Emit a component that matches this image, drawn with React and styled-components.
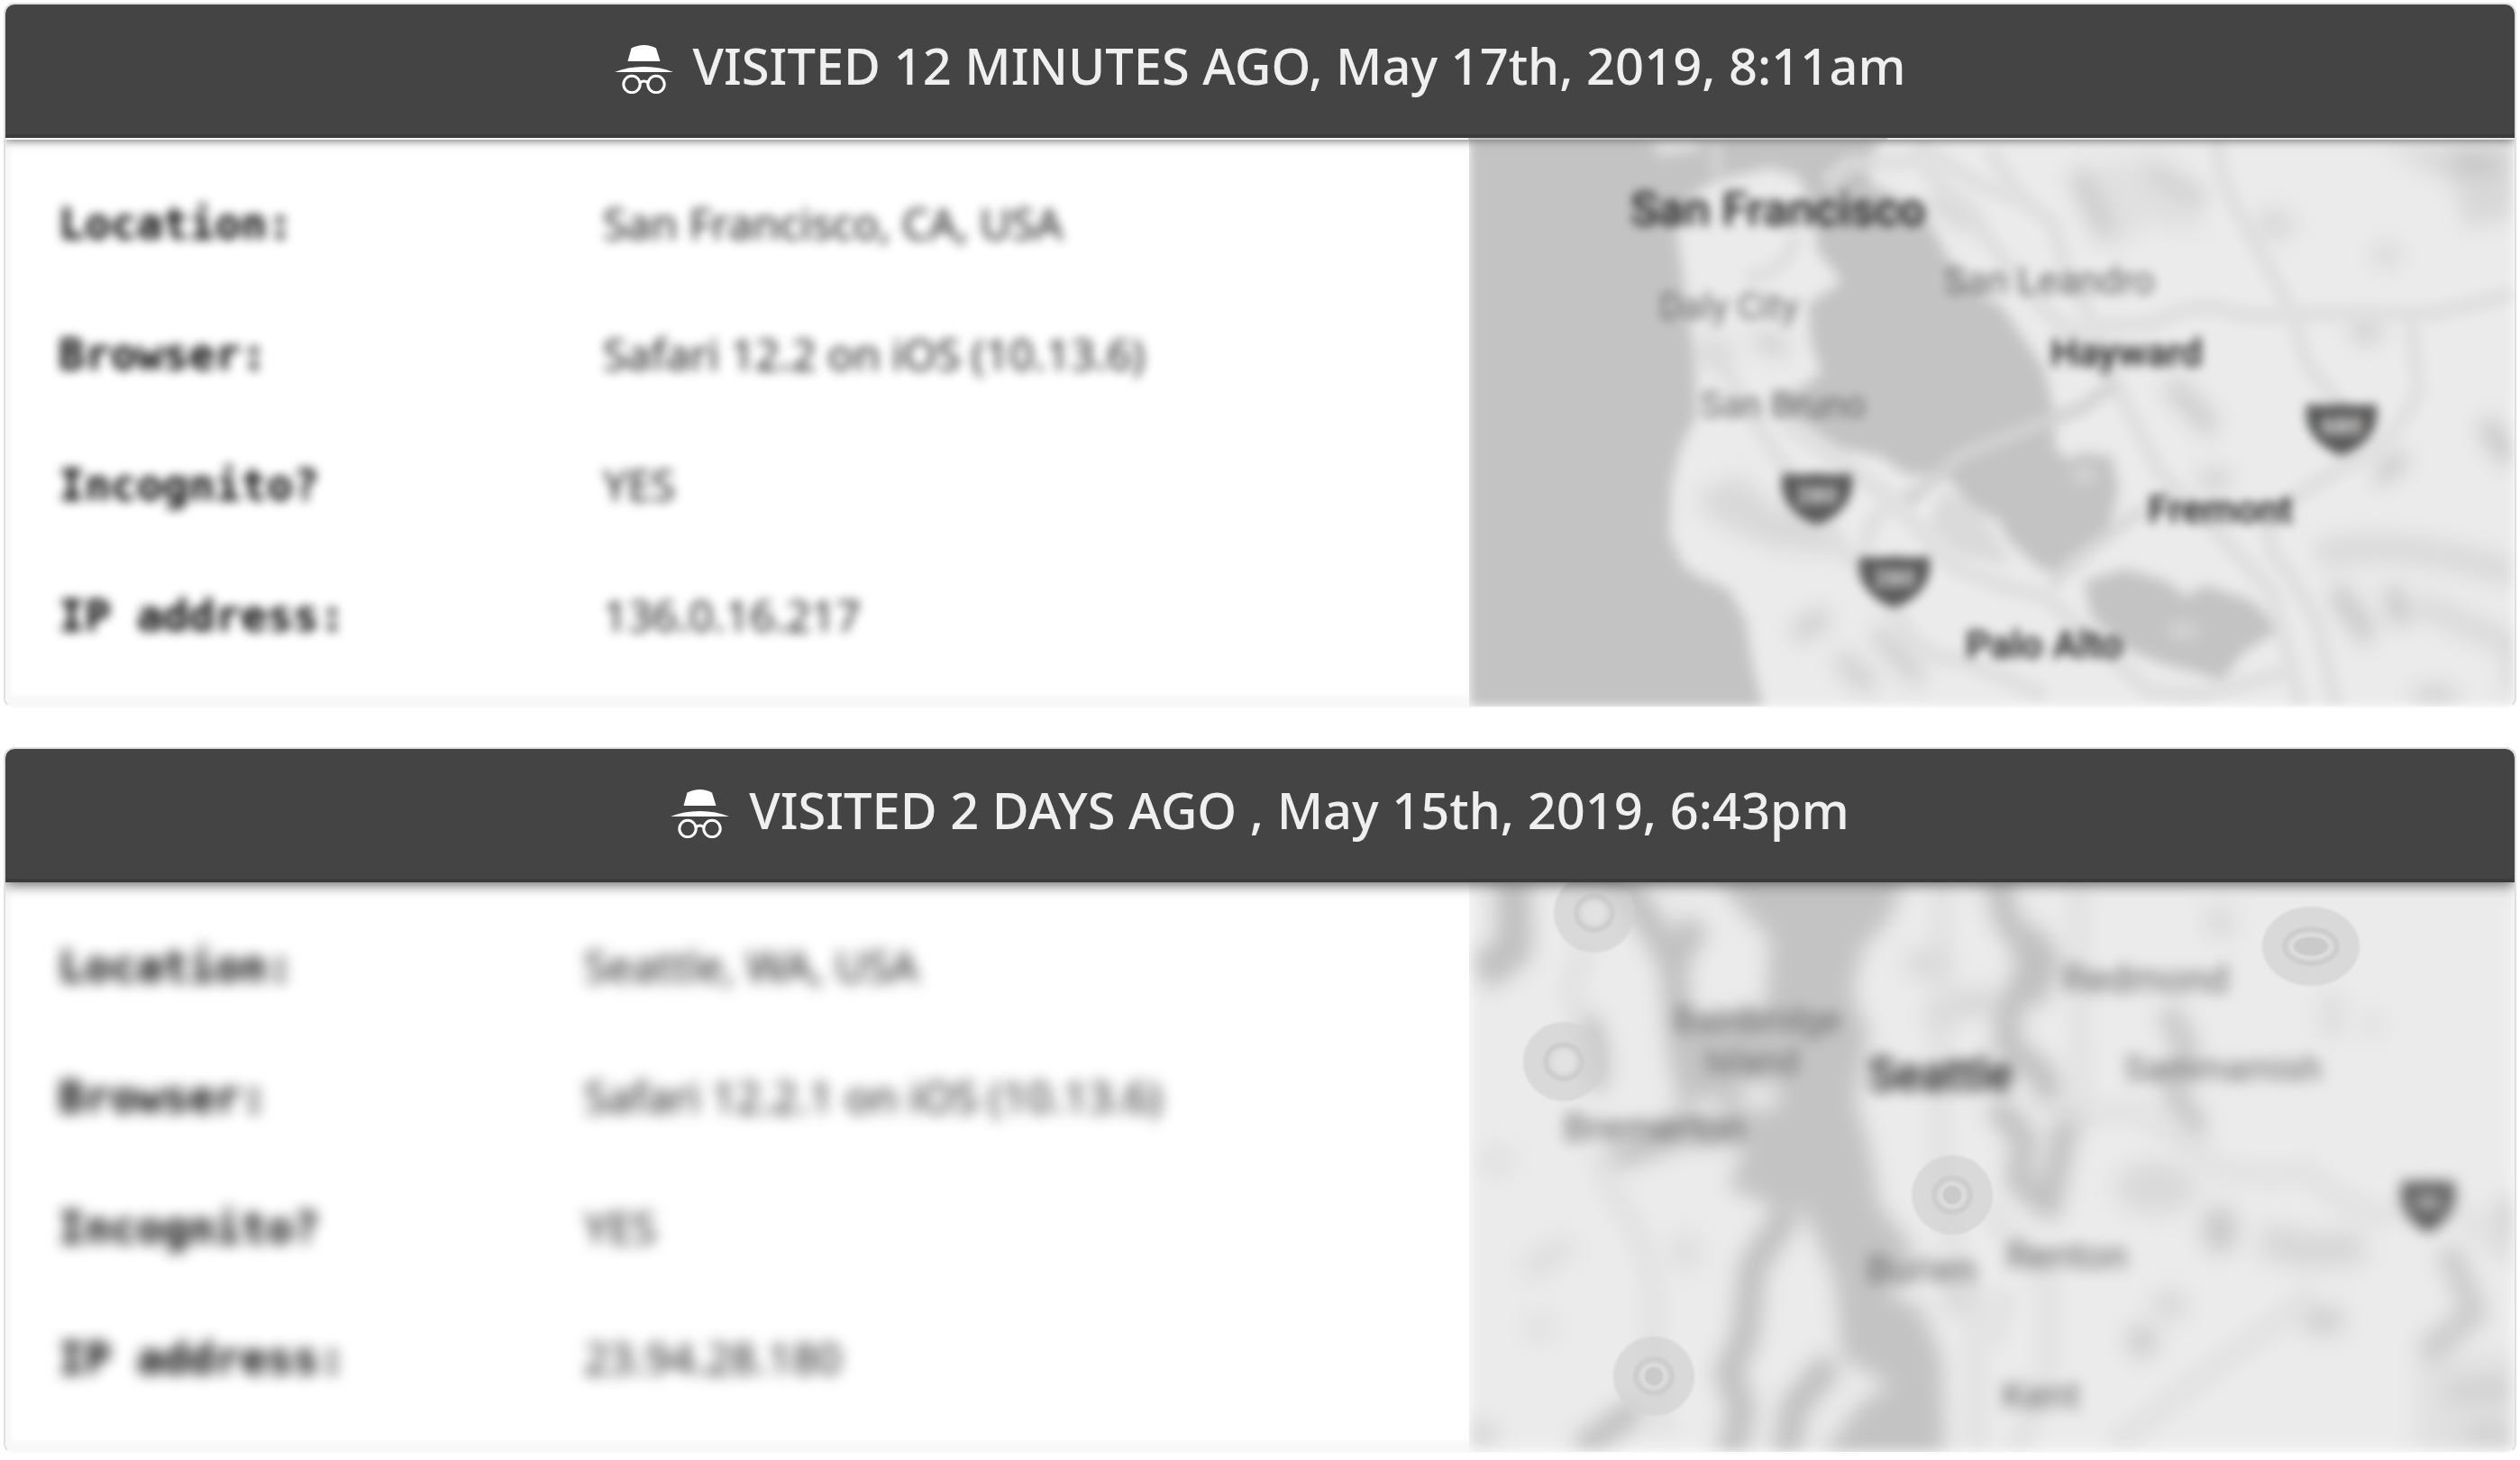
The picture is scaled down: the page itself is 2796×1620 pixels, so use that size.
import React from 'react';
import styled, { createGlobalStyle } from 'styled-components';

const GlobalStyle = createGlobalStyle`
  *, *::before, *::after { box-sizing: border-box; }
  body { margin: 0; background: #fff; }
`;

const Page = styled.main`
  display: flex;
  flex-direction: column;
  gap: 43px;
  padding: 3px 4px;
  font-family: 'Noto Sans', sans-serif;
`;

const Card = styled.article`
  border: 2px solid #dfdfdf;
  border-bottom-color: #fbfbfb;
  border-radius: 12px;
  overflow: hidden;
  background: #fff;
`;

const CardHeader = styled.header`
  position: relative;
  z-index: 1;
  display: flex;
  align-items: center;
  justify-content: center;
  gap: 22px;
  height: 148px;
  background: #444;
  border-bottom: 4px solid #3b3b3b;
  box-shadow: 0 3px ${(p) => (p.$deep ? 14 : 10)}px rgba(0, 0, 0, 0.6);
`;

const Seam = styled.div`
  position: relative;
  z-index: 2;
  height: 2px;
  background: linear-gradient(90deg, #fff 58.3%, #c6c6c6 58.3%, #c6c6c6 75%, #e9e9e9 75%);
`;

const Title = styled.h2`
  margin: 0;
  padding-bottom: 10px;
  color: #efefef;
  font-size: 56px;
  font-weight: 500;
  line-height: 76px;
  white-space: pre;
`;

const CardBody = styled.div`
  display: grid;
  grid-template-columns: 7fr 5fr;
  min-height: ${(p) => p.$minHeight}px;
  overflow: hidden;
`;

const Details = styled.dl`
  display: grid;
  grid-template-columns: ${(p) => p.$labelWidth}px 1fr;
  grid-auto-rows: 145px;
  align-items: center;
  align-content: start;
  margin: 0;
  padding: 20px 0 0 59px;
  box-shadow: inset 8px -14px 4px -2px #f8f8f8;
`;

const Label = styled.dt`
  color: #000;
  font: 700 48px/60px 'DejaVu Sans Mono', monospace;
  filter: blur(${(p) => p.$blur}px);
`;

const Value = styled.dd`
  margin: 0;
  color: #1c1c1c;
  font-size: 48px;
  line-height: 60px;
  filter: blur(${(p) => p.$blur}px);
`;

const MapFrame = styled.div`
  display: flex;
  min-width: 0;
  overflow: hidden;
`;

const MapDrawing = styled.svg`
  display: block;
  width: 100%;
  height: ${(p) => p.$height}px;
  font-family: Roboto, sans-serif;
  filter: blur(${(p) => p.$blur}px);
`;

const Terrain = styled.g`
  filter: blur(${(p) => p.$blur}px);
`;

const MapMarks = styled.g`
  filter: blur(1px);
`;

const HatIcon = () => (
  <svg width="65" height="54" viewBox="0 0 65 54" fill="#fff" aria-hidden="true">
    <path d="M14.5 18 L18.5 3.5 Q25 0 32.500 0 Q40 0 46 3.500 L50.500 18Z" />
    <path d="M0 30 Q14 24 32.500 24 Q51 24 65 30Z" />
    <g fill="none" stroke="#fff" strokeWidth="3">
      <circle cx="19" cy="43.500" r="9.200" />
      <circle cx="46" cy="43.500" r="9.200" />
      <path d="M28 42 Q32.500 38 37 42" />
    </g>
  </svg>
);

const Shield = ({ x, y, w = 38, label }) => (
  <g transform={`translate(${x} ${y})`}>
    <path
      d={`M${-w} -25 Q${-w / 2} -22 0 -25 Q${w / 2} -22 ${w} -25 C${w + 8} 6 ${w * 0.5} 27 0 32 C${-w * 0.5} 27 ${-w - 8} 6 ${-w} -25Z`}
      fill="#5c5c5c"
    />
    <text y="9" textAnchor="middle" fontSize="26" fontWeight="700" fill="#e4e4e4">{label}</text>
  </g>
);

const Place = ({ x, y, size = 40, city, children }) => (
  <text x={x} y={y} fontSize={size} fontWeight={city ? 500 : 400} fill={city ? '#141414' : '#666'}>
    {children}
  </text>
);

const BayAreaMap = () => (
  <MapDrawing $blur={6} $height={629} viewBox="0 0 1162 629" preserveAspectRatio="xMidYMid slice" role="img" aria-label="Map of San Francisco">
    <rect width="1162" height="629" fill="#ebebeb" />
    <Terrain $blur={11} transform="translate(-10 -15) scale(.3827 .4209)">
      <g fill="#d8d8d8" style={{ filter: 'blur(24px)' }}>
        <path d="M1830 110 L2000 80 2100 180 2160 280 1980 260 1900 330 1850 240Z" opacity=".6" />
        <path d="M1790 120 L1880 290" stroke="#ccc" strokeWidth="60" />
        <path d="M2000 110 L2160 200" stroke="#d2d2d2" strokeWidth="60" />
        <path d="M2690 60 L3080 40 3060 240 2920 270 2880 150Z" />
        <path d="M2880 90 L3010 100" stroke="#c6c6c6" strokeWidth="60" />
        <path d="M2060 680 L2190 800" stroke="#cdcdcd" strokeWidth="60" />
        <ellipse cx="2190" cy="930" rx="50" ry="22" fill="#cacaca" />
        <ellipse cx="2630" cy="540" rx="50" ry="24" fill="#c8c8c8" />
        <ellipse cx="2690" cy="340" rx="45" ry="30" />
        <ellipse cx="2365" cy="260" rx="60" ry="40" />
        <path d="M2660 930 L2740 870" stroke="#c4c4c4" strokeWidth="44" />
        <path d="M2970 780 L3050 880" stroke="#c8c8c8" strokeWidth="60" />
        <path d="M2490 1130 Q2720 1080 3060 1180" fill="none" stroke="#d8d8d8" strokeWidth="70" />
        <path d="M2540 1220 L2640 1350 M2700 1220 L2740 1310" stroke="#c8c8c8" strokeWidth="60" />
        <path d="M2780 1260 L3060 1370 3060 1500" fill="none" stroke="#d8d8d8" strokeWidth="60" />
        <ellipse cx="2830" cy="1500" rx="70" ry="22" fill="#ccc" />
        <path d="M690 970 L820 920 900 1000 1060 1020 1110 1130 900 1110 720 1030Z" />
        <path d="M970 1340 L1070 1290 M1210 1330 L1340 1460 M1100 1400 L1200 1480" stroke="#cecece" strokeWidth="54" />
        <path d="M860 560 L950 590" stroke="#ccc" strokeWidth="44" />
        <path d="M1370 190 L1500 260" stroke="#c8c8c8" strokeWidth="34" />
        <ellipse cx="740" cy="600" rx="60" ry="40" />
      </g>
      <path
        fill="#c3c3c3"
        d="M-60 -40 H1250 L1190 100 1190 150 1340 220 1390 300 1420 350 1500 440 1568 470 1614 530 1694 636 1723 742 1728 849 1770 880 1800 860 1892 870 1912 960 1882 1071 1800 1120 1733 1177 1684 1167 1594 1092 1564 1040 1480 1000 1430 940 1400 920 1300 920 1220 870 1100 850 960 760 900 730 990 690 1050 650 1020 570 1010 470 1110 410 1040 330 1020 200 980 130 900 110 740 145 650 200 630 270 650 400 680 600 690 760 640 850 615 950 610 1080 650 1160 700 1190 780 1220 830 1300 850 1420 900 1600 H-60Z"
      />
      <path fill="#ebebeb" d="M550 20 H710 L690 65 580 80Z" opacity=".7" />
      <path fill="#dadada" d="M1400 960 L1500 1000 1560 1090 1600 1160 1440 1130 1360 1050Z" />
      <path fill="#c3c3c3" d="M1813 1199 L1932 1167 2051 1199 2110 1241 2160 1209 2300 1252 2379 1326 2270 1390 2210 1464 2150 1443 2051 1421 1932 1379 1833 1294Z" />
      <ellipse cx="2100" cy="1330" rx="50" ry="30" fill="#cfcfcf" />
      <ellipse cx="1810" cy="920" rx="40" ry="24" fill="#d2d2d2" />
    </Terrain>
    <g transform="translate(-10 -15) scale(.3827 .4209)">
      <g fill="none" stroke="#dedede" strokeWidth="50" opacity=".7" strokeLinejoin="round">
        <path d="M2195 0 Q2200 130 2250 212 L2409 477 2458 626 2558 741 2558 901 2409 986 2349 1050 Q2340 1130 2400 1170 L2488 1310 2560 1600" />
        <path d="M1843 530 L2011 520 Q2110 470 2200 480 Q2300 510 2400 495 L2826 493 3072 440" />
        <path d="M1535 64 L1634 191 1723 260 1753 361 1843 530 1902 679 2031 912 2210 1083 2359 1232 2448 1560" />
        <path d="M1060 150 L1130 100 1330 90 1480 230 1640 430 1740 520 1843 560" />
        <path d="M1320 40 L1500 150 1640 200" />
        <path d="M2760 510 L2780 700 Q2720 830 2558 901" />
        <path d="M740 590 L900 840 1100 1100 1280 1300 Q1330 1400 1460 1410 L1700 1500" />
        <path d="M940 780 L1250 980 1430 1160 1568 1210 1700 1240 1850 1370 2000 1490 2150 1500 2400 1440" />
        <path d="M1180 1120 Q1180 1010 1320 970" />
        <path d="M830 400 Q960 390 970 280" />
      </g>
      <g fill="none" stroke="#d2d2d2" strokeWidth="44" opacity=".8">
        <path d="M1300 990 L1450 870 1568 825 1800 745 1902 679" />
        <path d="M1713 1210 L1850 1100 1980 1010" opacity=".7" />
        <path d="M740 30 L750 130" />
      </g>
    </g>
    <Place x={180} y={95} size={52} city>San Francisco</Place>
    <Place x={212} y={199}>Daly City</Place>
    <Place x={258} y={308}>San Bruno</Place>
    <Place x={528} y={171} size={42}>San Leandro</Place>
    <Place x={646} y={251} size={43} city>Hayward</Place>
    <Place x={754} y={425} size={43} city>Fremont</Place>
    <Place x={552} y={575} size={43} city>Palo Alto</Place>
    <Shield x={387} y={395} label="280" />
    <Shield x={473} y={487} label="280" />
    <Shield x={969} y={318} label="680" />
  </MapDrawing>
);

const SeattleMap = () => (
  <MapDrawing $blur={8} $height={632} viewBox="0 0 1162 632" preserveAspectRatio="xMidYMid slice" role="img" aria-label="Map of Seattle">
    <rect width="1162" height="632" fill="#ebebeb" />
    <Terrain $blur={22} transform="translate(-10 -19) scale(.3827 .4209)">
      <g fill="#dedede" style={{ filter: 'blur(14px)' }}>
        <path d="M190 1070 L320 1000" stroke="#dcdcdc" strokeWidth="60" />
        <ellipse cx="110" cy="780" rx="50" ry="35" />
        <ellipse cx="235" cy="1220" rx="40" ry="35" />
        <ellipse cx="655" cy="1020" rx="50" ry="50" />
        <ellipse cx="2205" cy="150" rx="45" ry="36" fill="#d6d6d6" />
        <path d="M2530 340 L2530 450 M2650 400 L2650 440" stroke="#d8d8d8" strokeWidth="50" />
        <ellipse cx="2020" cy="850" rx="120" ry="70" fill="#d9d9d9" />
        <ellipse cx="2205" cy="960" rx="50" ry="60" fill="#c6c6c6" />
        <path d="M2330 980 Q2450 1040 2620 1000" fill="none" stroke="#d6d6d6" strokeWidth="90" />
        <ellipse cx="2505" cy="1200" rx="65" ry="36" fill="#cdcdcd" />
        <ellipse cx="1980" cy="1255" rx="42" ry="42" fill="#c8c8c8" />
        <ellipse cx="2060" cy="1160" rx="50" ry="40" fill="#d6d6d6" />
        <path d="M2780 1290 H3080 V1560 H2780Z" fill="#e0e0e0" />
        <path d="M2870 1390 L3050 1380 M2920 1500 H3050" stroke="#cdcdcd" strokeWidth="50" />
        <ellipse cx="3040" cy="940" rx="40" ry="70" fill="#d2d2d2" />
        <path d="M1370 420 Q1430 350 1560 360 M1300 260 H1420" fill="none" stroke="#d4d4d4" strokeWidth="60" />
        <ellipse cx="1450" cy="1140" rx="45" ry="40" fill="#d2d2d2" />
        <ellipse cx="60" cy="1500" rx="45" ry="30" fill="#cfcfcf" />
      </g>
      <path
        fill="#c3c3c3"
        d="M730 0 H1300 L1250 140 1170 220 1140 340 1190 440 1150 620 1190 740 1220 900 1320 1010 1250 1130 1340 1170 1400 1300 1410 1620 H1000 L1160 1420 1250 1370 1110 1300 1090 1100 1030 970 990 900 950 920 860 880 780 850 830 740 660 740 470 800 400 770 560 690 640 640 600 480 640 420 890 370 900 190 850 150 800 100Z"
      />
      <ellipse cx="720" cy="640" rx="60" ry="28" fill="#e6e6e6" />
      <ellipse cx="870" cy="610" rx="64" ry="38" fill="#e8e8e8" />
      <g fill="none" stroke="#c0c0c0" strokeLinejoin="round" strokeWidth="80">
        <path d="M960 910 L870 1030 850 1060 830 1240 780 1340 820 1430 780 1600" />
        <path d="M1080 1310 L970 1430 940 1600" />
        <path d="M155 -20 L160 220 60 290" strokeWidth="100" />
        <path d="M430 0 L560 160 620 260 690 150 M620 240 L640 460" />
        <path d="M370 400 L400 480 400 590" strokeWidth="60" />
        <path d="M350 1540 L520 1430" strokeWidth="70" />
        <path d="M1555 0 L1580 130 1664 240 1620 340 1590 400 V480 L1690 550 1720 620" strokeWidth="75" />
        <path d="M1640 190 L1690 260 1640 350" strokeWidth="110" />
        <path d="M1550 630 L1640 720 1620 830 1710 900 1750 720 1780 650" strokeWidth="70" />
        <path d="M2051 380 L2110 480 2071 600 2150 710" stroke="#c8c8c8" strokeWidth="70" />
        <path d="M2865 1010 L2945 1180 2796 1290" stroke="#cbcbcb" strokeWidth="70" />
      </g>
    </Terrain>
    <g transform="translate(-10 -19) scale(.3827 .4209)">
      <g fill="none" stroke="#dedede" strokeWidth="80" strokeLinejoin="round" opacity=".5">
        <path d="M370 200 L320 340 370 420" />
        <path d="M400 760 L450 870 Q560 1020 560 1130 V1260 L590 1500" />
        <path d="M1400 0 L1390 720 1430 1000 1500 1180 1500 1600" />
        <path d="M1793 0 L1803 600 1793 700" />
        <path d="M1700 650 H1950 Q2060 680 2200 800 Q2330 830 2458 810 Q2560 900 2680 920 L2860 880 3080 1050" />
        <path d="M2480 1130 L2210 1310 2080 1400 1900 1530" />
        <path d="M1530 900 L1704 1100 1704 1340 1610 1560 M1590 1120 L1540 1260" />
      </g>
    </g>
    <Place x={228} y={166} size={39}>Bainbridge</Place>
    <Place x={262} y={212} size={39}>Island</Place>
    <Place x={106} y={287} size={43}>Bremerton</Place>
    <Place x={444} y={231} size={51} city>Seattle</Place>
    <Place x={442} y={444} size={43}>Burien</Place>
    <Place x={660} y={122} size={43}>Redmond</Place>
    <Place x={728} y={220} size={39}>Sammamish</Place>
    <Place x={597} y={429} size={43}>Renton</Place>
    <Place x={592} y={584} size={43}>Kent</Place>
    <Shield x={1065} y={356} w={28} label="90" />
  </MapDrawing>
);

const RouteMark = ({ x, y, rx = 45, light }) => (
  <g transform={`translate(${x} ${y})`} fill="none">
    <ellipse rx={rx} ry="44" fill="#d2d2d2" fillOpacity=".7" />
    <ellipse rx={rx - 25} ry="19" stroke="#cdcdcd" strokeWidth="6" />
    <ellipse rx={rx - 33} ry="12" fill={light ? '#e2e2e2' : '#cacaca'} stroke="#dedede" strokeWidth="3" />
  </g>
);

const MarkLayer = styled.svg`
  position: absolute;
  inset: 0;
  width: 100%;
  height: 100%;
`;

const MapStack = styled.div`
  position: relative;
  flex: 1;
  min-width: 0;
`;

const visits = [
  {
    title: 'VISITED 12 MINUTES AGO, May 17th, 2019, 8:11am',
    blur: 6,
    labelWidth: 604,
    minHeight: 629,
    seam: true,
    rows: [
      ['Location:', 'San Francisco, CA, USA'],
      ['Browser:', 'Safari 12.2 on iOS (10.13.6)'],
      ['Incognito?', 'YES'],
      ['IP address:', '136.0.16.217'],
    ],
    map: <BayAreaMap />,
  },
  {
    title: 'VISITED 2 DAYS AGO , May 15th, 2019, 6:43pm',
    blur: 8,
    labelWidth: 583,
    minHeight: 632,
    rows: [
      ['Location:', 'Seattle, WA, USA'],
      ['Browser:', 'Safari 12.2.1 on iOS (10.13.6)'],
      ['Incognito?', 'YES'],
      ['IP address:', '23.94.28.180'],
    ],
    map: (
      <>
        <SeattleMap />
        <MarkLayer viewBox="0 0 1162 632" preserveAspectRatio="xMidYMid slice" aria-hidden="true">
          <MapMarks>
            <RouteMark x={140} y={34} light />
            <RouteMark x={106} y={199} light />
            <RouteMark x={537} y={347} />
            <RouteMark x={206} y={548} />
            <RouteMark x={935} y={71} rx={54} />
          </MapMarks>
        </MarkLayer>
      </>
    ),
  },
];

const VisitCard = ({ visit }) => (
  <Card>
    <CardHeader $deep={!visit.seam}>
      <HatIcon />
      <Title>{visit.title}</Title>
    </CardHeader>
    {visit.seam && <Seam />}
    <CardBody $minHeight={visit.minHeight}>
      <Details $labelWidth={visit.labelWidth}>
        {visit.rows.map(([label, value]) => (
          <React.Fragment key={label}>
            <Label $blur={visit.blur}>{label}</Label>
            <Value $blur={visit.blur}>{value}</Value>
          </React.Fragment>
        ))}
      </Details>
      <MapFrame>
        <MapStack>{visit.map}</MapStack>
      </MapFrame>
    </CardBody>
  </Card>
);

export default function App() {
  return (
    <>
      <GlobalStyle />
      <Page>
        {visits.map((visit) => (
          <VisitCard key={visit.title} visit={visit} />
        ))}
      </Page>
    </>
  );
}
